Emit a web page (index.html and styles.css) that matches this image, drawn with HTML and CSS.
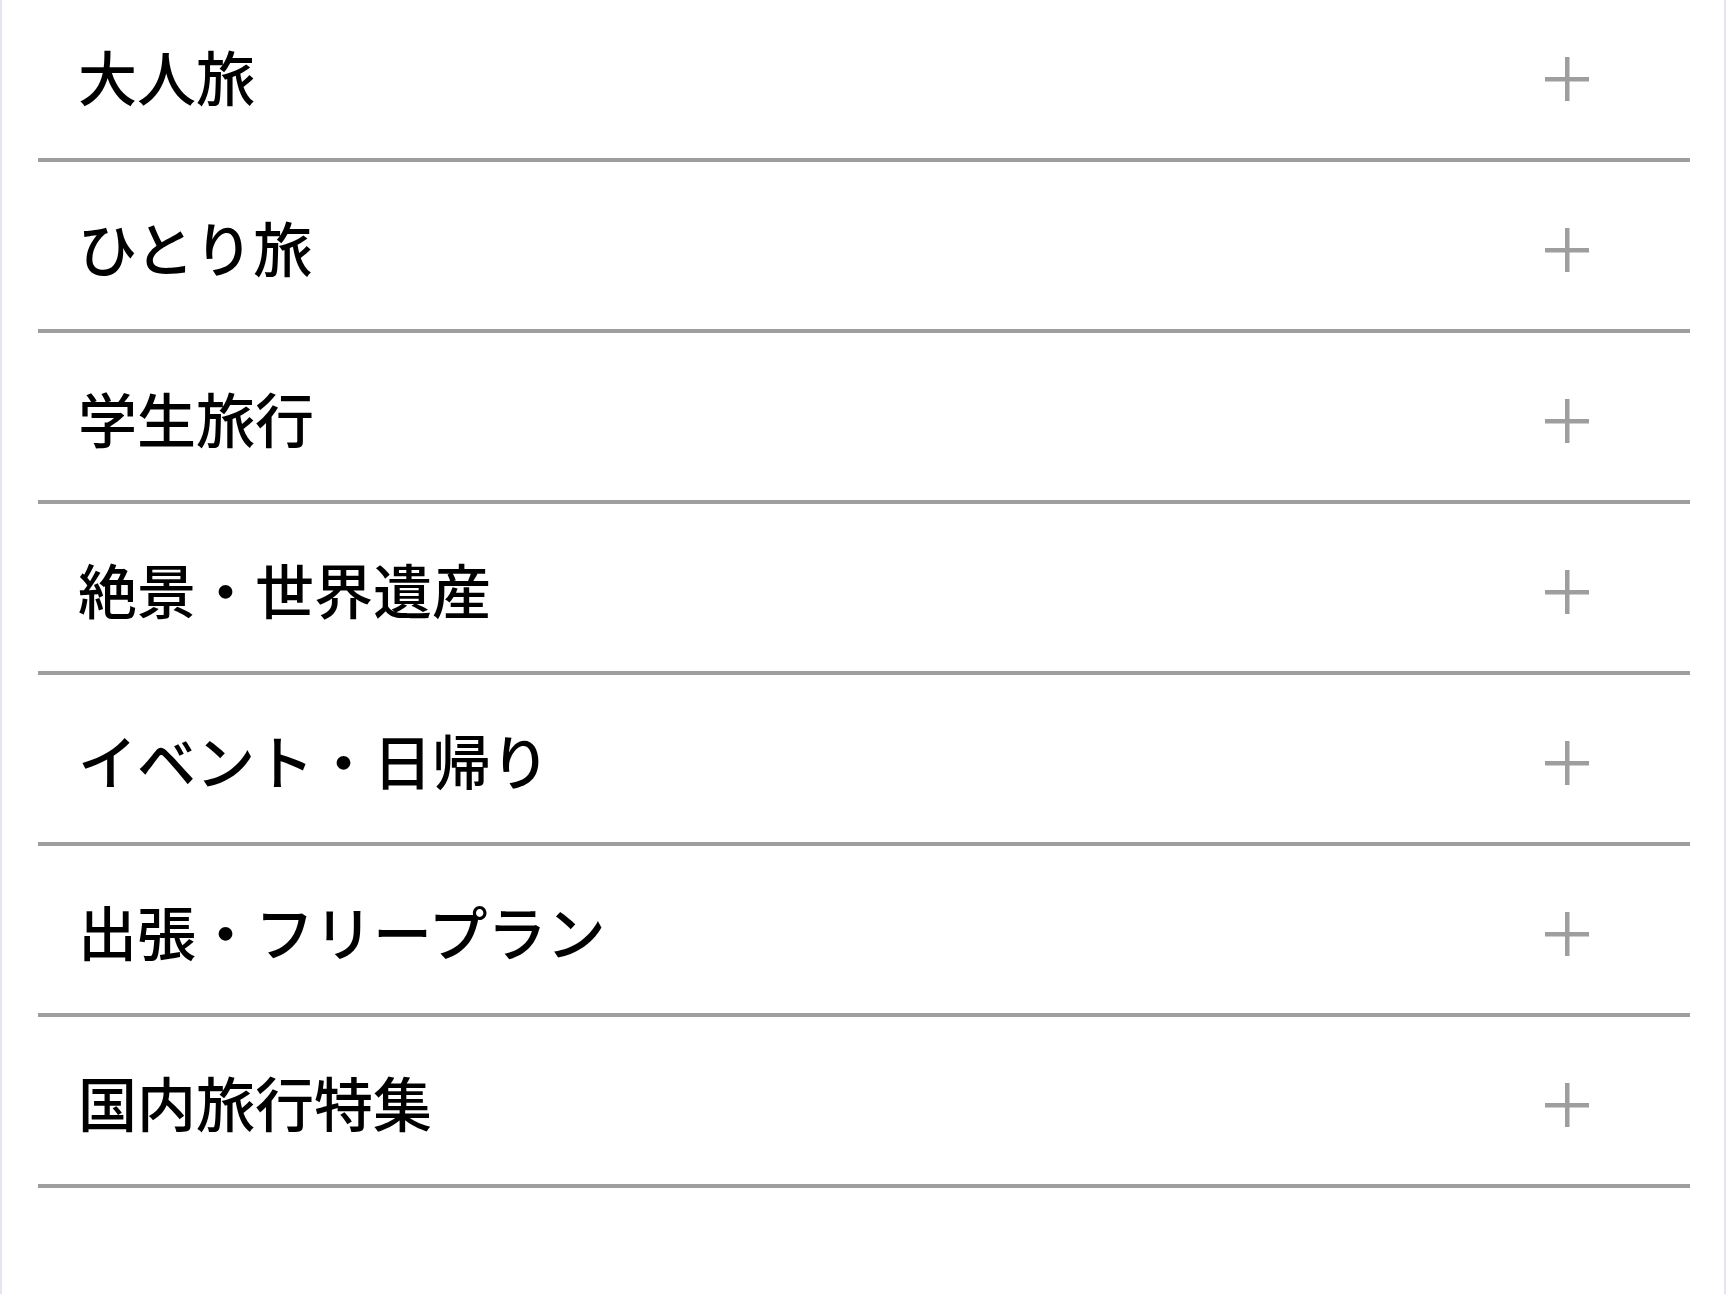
FILE: index.html
```html
<!DOCTYPE html>
<html lang="ja">
<head>
<meta charset="utf-8">
<title>旅のテーマ</title>
<link rel="stylesheet" href="styles.css">
</head>
<body>
<div class="frame">
  <ul class="menu">
    <li class="item"><span class="label">大人旅</span><svg class="plus" viewBox="0 0 44 44" aria-hidden="true"><rect x="0" y="20" width="44" height="4.5"/><rect x="20" y="0" width="4.5" height="44"/></svg></li>
    <li class="item"><span class="label">ひとり旅</span><svg class="plus" viewBox="0 0 44 44" aria-hidden="true"><rect x="0" y="20" width="44" height="4.5"/><rect x="20" y="0" width="4.5" height="44"/></svg></li>
    <li class="item"><span class="label">学生旅行</span><svg class="plus" viewBox="0 0 44 44" aria-hidden="true"><rect x="0" y="20" width="44" height="4.5"/><rect x="20" y="0" width="4.5" height="44"/></svg></li>
    <li class="item"><span class="label">絶景・世界遺産</span><svg class="plus" viewBox="0 0 44 44" aria-hidden="true"><rect x="0" y="20" width="44" height="4.5"/><rect x="20" y="0" width="4.5" height="44"/></svg></li>
    <li class="item"><span class="label">イベント・日帰り</span><svg class="plus" viewBox="0 0 44 44" aria-hidden="true"><rect x="0" y="20" width="44" height="4.5"/><rect x="20" y="0" width="4.5" height="44"/></svg></li>
    <li class="item"><span class="label">出張・フリープラン</span><svg class="plus" viewBox="0 0 44 44" aria-hidden="true"><rect x="0" y="20" width="44" height="4.5"/><rect x="20" y="0" width="4.5" height="44"/></svg></li>
    <li class="item"><span class="label">国内旅行特集</span><svg class="plus" viewBox="0 0 44 44" aria-hidden="true"><rect x="0" y="20" width="44" height="4.5"/><rect x="20" y="0" width="4.5" height="44"/></svg></li>
  </ul>
</div>
</body>
</html>
```

FILE: styles.css
```css
html, body {
  margin: 0;
  padding: 0;
  background: #ffffff;
}

body {
  font-family: "Noto Sans CJK JP", "Noto Sans", sans-serif;
  color: #000000;
  overflow: hidden;
}

.frame {
  box-sizing: border-box;
  height: 1294px;
  border-left: 2px solid #e3e6ef;
  border-right: 2px solid #e3e6ef;
  overflow: hidden;
}

.menu {
  list-style: none;
  margin: -9px 34px 0 36px;
  padding: 0;
}

.item {
  box-sizing: border-box;
  height: 171px;
  padding: 8px 101px 0 40px;
  border-bottom: 4px solid #9e9e9e;
  display: flex;
  align-items: center;
  justify-content: space-between;
}

.label {
  font-size: 59px;
  line-height: 1;
  font-weight: 500;
  padding-bottom: 6px;
}

.plus {
  width: 44px;
  height: 44px;
  fill: #9e9e9e;
  flex: none;
}
```
